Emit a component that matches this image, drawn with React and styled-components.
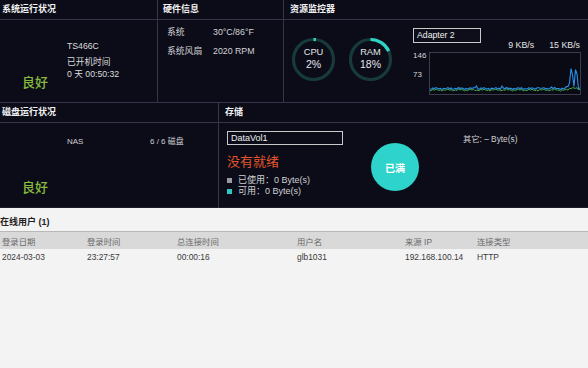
import React from 'react'
import styled, { createGlobalStyle } from 'styled-components'

const GlobalStyle = createGlobalStyle`
  html, body {
    margin: 0;
    padding: 0;
    background: #f3f3f3;
  }
  body {
    font-family: "Liberation Sans", "Noto Sans CJK SC", sans-serif;
    font-size: 9px;
  }
`;

const Page = styled.div`
  width: 588px;
  height: 368px;
  overflow: hidden;
  background: #f3f3f3;
`;

const Dark = styled.div`
  background: #0b0c18;
  color: #d6d6d8;
  height: 208px;
  border-bottom: 1px solid #1c1d28;
  box-sizing: border-box;
`;

const Row = styled.div`
  display: grid;
  grid-template-columns: ${p => p.cols};
  height: ${p => p.h}px;
  border-bottom: ${p => (p.last ? 'none' : '1px solid #34364a')};
`;

const Panel = styled.div`
  display: flex;
  flex-direction: column;
  border-right: ${p => (p.last ? 'none' : '1px solid #34364a')};
  min-width: 0;
`;

const PanelHeader = styled.div`
  height: 19px;
  line-height: 19px;
  padding-left: ${p => p.pad || 5}px;
  border-bottom: 1px solid #34364a;
  color: #f2f2f2;
  font-weight: bold;
  font-size: 9px;
  flex-shrink: 0;
`;

const Good = styled.div`
  color: #86bb3e;
  font-size: 13px;
  line-height: 15px;
  font-weight: 500;
`;

/* system status */
const StatusBody = styled.div`
  flex: 1;
  display: grid;
  grid-template-columns: 67px 1fr;
`;

const StatusLeft = styled.div`
  display: flex;
  align-items: flex-end;
  padding: 0 0 12px 22px;
`;

const InfoLines = styled.div`
  padding-top: 20px;
  display: flex;
  flex-direction: column;
  line-height: 12px;
  font-size: 8.7px;
  color: #dcdcdc;
`;

const InfoGap = styled.div`
  height: 4px;
`;

/* hardware */
const HwBody = styled.div`
  padding: 2px 0 0 9px;
  display: grid;
  grid-template-columns: 46px 1fr;
  grid-auto-rows: 19px;
  align-items: center;
  font-size: 8.8px;
  color: #d4d4d6;
`;

/* resource monitor */
const ResBody = styled.div`
  flex: 1;
  display: flex;
  align-items: flex-start;
  padding-left: 7px;
`;

const Rings = styled.div`
  display: flex;
  gap: 12px;
  margin-top: 17px;
`;

const RingWrap = styled.div`
  position: relative;
  width: 45px;
  height: 45px;
`;

const RingText = styled.div`
  position: absolute;
  inset: 0;
  display: flex;
  flex-direction: column;
  align-items: center;
  justify-content: center;
  color: #e6e6e8;
  font-size: 9.3px;
  line-height: 12px;
  padding-bottom: 2px;
  span:last-child {
    font-size: 10.5px;
    line-height: 13px;
  }
`;

const NetCol = styled.div`
  margin-left: 20px;
  width: 168px;
  padding-top: 8px;
  display: flex;
  flex-direction: column;
`;

const SelectBox = styled.div`
  width: 63px;
  height: 13px;
  line-height: 13px;
  border: 1px solid #c9c9cc;
  padding-left: 3px;
  color: #f0f0f0;
  font-size: 8.7px;
  background: #0d0e1a;
`;

const Rates = styled.div`
  display: flex;
  justify-content: flex-end;
  gap: 15px;
  margin-top: -3px;
  padding-right: 1px;
  font-size: 8.8px;
  line-height: 11px;
  color: #e4e4e6;
`;

const ChartRow = styled.div`
  display: flex;
  margin-top: 1px;
`;

const Axis = styled.div`
  width: 16px;
  display: flex;
  flex-direction: column;
  gap: 8px;
  font-size: 8px;
  line-height: 11px;
  color: #d6d6d8;
  margin-top: -2px;
`;

const ChartBox = styled.div`
  width: 150px;
  height: 41px;
  border: 1px solid #3b3d4c;
  background: #090a14;
`;

/* disk */
const DiskBody = styled.div`
  flex: 1;
  display: flex;
  flex-direction: column;
  padding: 13px 0 13px 0;
`;

const DiskRow = styled.div`
  display: grid;
  grid-template-columns: 83px auto;
  padding-left: 67px;
  font-size: 8px;
  line-height: 11px;
  color: #d0d0d2;
`;

const DiskGood = styled(Good)`
  margin-top: auto;
  padding-left: 22px;
`;

/* storage */
const StoreBody = styled.div`
  flex: 1;
  display: flex;
  padding-left: 8px;
`;

const StoreLeft = styled.div`
  width: 116px;
  padding-top: 8px;
  display: flex;
  flex-direction: column;
`;

const VolBox = styled.div`
  height: 12px;
  line-height: 12px;
  border: 1px solid #c9c9cc;
  padding-left: 3px;
  font-size: 9px;
  color: #f0f0f0;
`;

const NotReady = styled.div`
  margin-top: 9px;
  color: #e2562a;
  font-size: 13px;
  line-height: 16px;
`;

const Legend = styled.div`
  margin-top: 5px;
  display: flex;
  flex-direction: column;
  font-size: 9px;
  line-height: 11px;
  color: #d0d0d2;
`;

const LegendItem = styled.div`
  display: flex;
  align-items: center;
  &::before {
    content: '';
    width: 5px;
    height: 5px;
    background: ${p => p.color};
    margin-right: 6px;
  }
`;

const FullCircle = styled.div`
  width: 48px;
  height: 48px;
  border-radius: 50%;
  background: #2ed3cb;
  margin: 20px 0 0 28px;
  display: flex;
  align-items: center;
  justify-content: center;
  color: #ffffff;
  font-weight: bold;
  font-size: 10px;
`;

const Other = styled.div`
  margin: 11px 0 0 44px;
  font-size: 8.3px;
  line-height: 11px;
  color: #d0d0d2;
`;

/* online users */
const Users = styled.div`
  padding-top: 8px;
  color: #333;
`;

const UsersTitle = styled.div`
  font-weight: bold;
  font-size: 9px;
  line-height: 12px;
  color: #222;
  margin-bottom: 3px;
`;

const TableRow = styled.div`
  display: grid;
  grid-template-columns: 85px 90px 120px 108px 72px 1fr;
  height: ${p => (p.head ? 17 : 16)}px;
  align-items: center;
  font-size: 8.4px;
  background: ${p => (p.head ? '#d9d9d9' : 'transparent')};
  border-top: ${p => (p.head ? '1px solid #b8b8b8' : 'none')};
  color: ${p => (p.head ? '#6a6a6a' : '#3a3a3a')};
  & > span {
    padding-left: 2px;
  }
`;

const Ring = ({ pct, label }) => {
  const r = 20;
  const c = 2 * Math.PI * r;
  const len = Math.max(pct / 100 * c, 1.2);
  return (
    <RingWrap>
      <svg width="45" height="45" viewBox="0 0 45 45">
        <circle cx="22.5" cy="22.5" r={r} fill="none" stroke="#173a3b" strokeWidth="3.2" />
        <circle
          cx="22.5" cy="22.5" r={r} fill="none" stroke="#2fd2c4" strokeWidth="3.2"
          strokeDasharray={`${len} ${c}`}
          transform="rotate(-90 22.5 22.5)"
        />
      </svg>
      <RingText>
        <span>{label}</span>
        <span>{pct}%</span>
      </RingText>
    </RingWrap>
  );
};

const makeLine = (base, bumps) => {
  const pts = [];
  for (let x = 0; x <= 150; x += 1.5) {
    let y = base + Math.sin(x * 1.7) * 0.6 + Math.cos(x * 0.53) * 0.5;
    bumps.forEach(([bx, h, w]) => {
      const d = Math.abs(x - bx);
      if (d < w) y -= h * (1 - d / w);
    });
    pts.push(`${x.toFixed(1)},${y.toFixed(1)}`);
  }
  return pts.join(' ');
};

const blue = makeLine(35.5, [[46, 4, 1.6], [72, 3, 1.6], [108, 2, 1.6], [121, 1.5, 2], [139, 3, 4], [141.5, 25, 2.2], [146, 25, 2.2]]);
const green = makeLine(37, [[142, 3, 4], [146, 2, 3]]);

const App = () => {
  return (
    <Page>
      <GlobalStyle />
      <Dark>
        <Row cols="158px 126px 1fr" h={102}>
          <Panel>
            <PanelHeader pad={2}>系统运行状况</PanelHeader>
            <StatusBody>
              <StatusLeft><Good>良好</Good></StatusLeft>
              <InfoLines>
                <span>TS466C</span>
                <InfoGap />
                <span>已开机时间</span>
                <span>0 天 00:50:32</span>
              </InfoLines>
            </StatusBody>
          </Panel>
          <Panel>
            <PanelHeader>硬件信息</PanelHeader>
            <HwBody>
              <span>系统</span><span>30°C/86°F</span>
              <span>系统风扇</span><span>2020 RPM</span>
            </HwBody>
          </Panel>
          <Panel last>
            <PanelHeader pad={6}>资源监控器</PanelHeader>
            <ResBody>
              <Rings>
                <Ring pct={2} label="CPU" />
                <Ring pct={18} label="RAM" />
              </Rings>
              <NetCol>
                <SelectBox>Adapter 2</SelectBox>
                <Rates>
                  <span>9 KB/s</span>
                  <span>15 KB/s</span>
                </Rates>
                <ChartRow>
                  <Axis>
                    <span>146</span>
                    <span>73</span>
                  </Axis>
                  <ChartBox>
                    <svg width="150" height="41" viewBox="0 0 150 41">
                      <polyline points={green} fill="none" stroke="#3fae4a" strokeWidth="1" />
                      <polyline points={blue} fill="none" stroke="#2b8fe6" strokeWidth="1.1" />
                    </svg>
                  </ChartBox>
                </ChartRow>
              </NetCol>
            </ResBody>
          </Panel>
        </Row>
        <Row cols="219px 1fr" h={105} last>
          <Panel>
            <PanelHeader pad={2}>磁盘运行状况</PanelHeader>
            <DiskBody>
              <DiskRow>
                <span>NAS</span>
                <span>6 / 6 磁盘</span>
              </DiskRow>
              <DiskGood>良好</DiskGood>
            </DiskBody>
          </Panel>
          <Panel last>
            <PanelHeader pad={6}>存储</PanelHeader>
            <StoreBody>
              <StoreLeft>
                <VolBox>DataVol1</VolBox>
                <NotReady>没有就绪</NotReady>
                <Legend>
                  <LegendItem color="#9a9aa2">已使用：0 Byte(s)</LegendItem>
                  <LegendItem color="#2ec8c0">可用：0 Byte(s)</LegendItem>
                </Legend>
              </StoreLeft>
              <FullCircle>已满</FullCircle>
              <Other>其它: – Byte(s)</Other>
            </StoreBody>
          </Panel>
        </Row>
      </Dark>
      <Users>
        <UsersTitle>在线用户 (1)</UsersTitle>
        <TableRow head>
          <span>登录日期</span>
          <span>登录时间</span>
          <span>总连接时间</span>
          <span>用户名</span>
          <span>来源 IP</span>
          <span>连接类型</span>
        </TableRow>
        <TableRow>
          <span>2024-03-03</span>
          <span>23:27:57</span>
          <span>00:00:16</span>
          <span>glb1031</span>
          <span>192.168.100.14</span>
          <span>HTTP</span>
        </TableRow>
      </Users>
    </Page>
  )
}

export default App
